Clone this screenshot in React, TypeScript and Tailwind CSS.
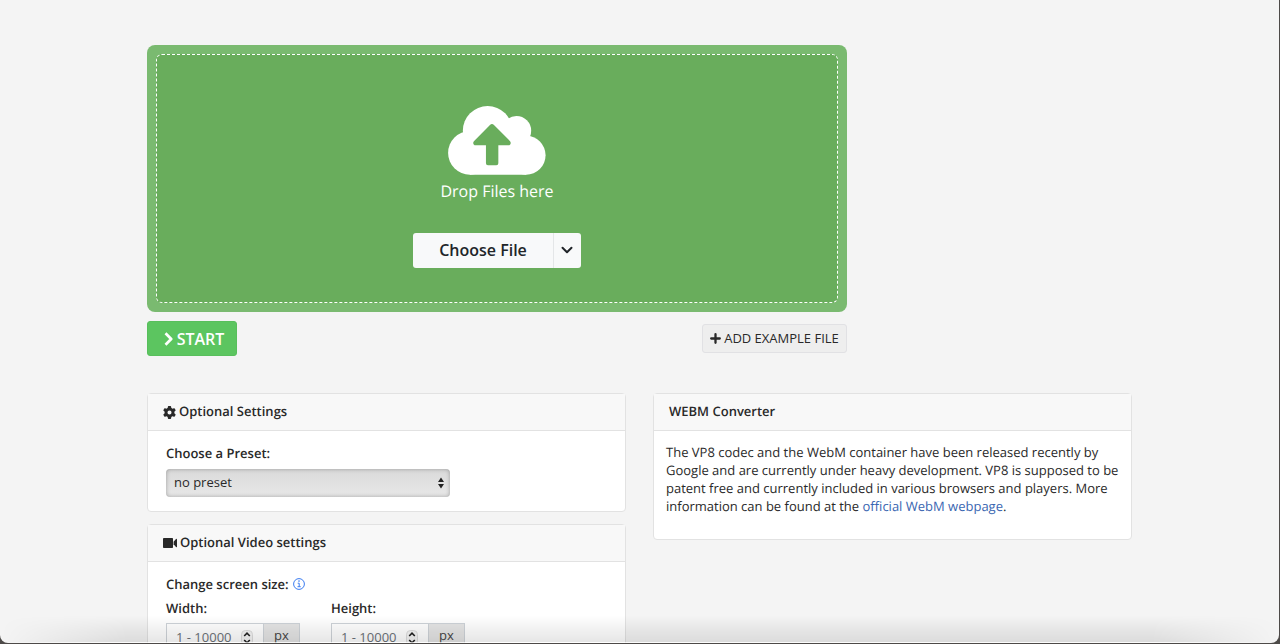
import React from "react";
import { FaGear } from "react-icons/fa6";

function CloudUpload() {
  return (
    <svg viewBox="144 48 292 206" className="h-[69px] w-[98px]" aria-hidden="true">
      <g fill="#fff">
        <circle cx="209" cy="188" r="65" />
        <circle cx="262" cy="122" r="74" />
        <circle cx="348" cy="122" r="44" />
        <circle cx="377" cy="195" r="58" />
        <path d="M209 123H377V253H209z" />
      </g>
      <path
        d="M269 105Q275 99 281 105L329 153Q334 160 327 165H294V219Q294 225 288 225H263Q257 225 257 219V165H223Q216 160 221 153Z"
        fill="#69ad5c"
      />
    </svg>
  );
}

function PlusIcon() {
  return (
    <svg viewBox="0 0 11 11" className="size-[11px]" stroke="currentColor" strokeWidth="2.3" strokeLinecap="round" aria-hidden="true">
      <path d="M5.5 1.2V9.8M1.2 5.5H9.8" />
    </svg>
  );
}

function VideoIcon() {
  return (
    <svg viewBox="0 0 14 10" className="h-[10px] w-[14px]" fill="currentColor" aria-hidden="true">
      <rect width="10" height="10" rx="0.8" />
      <path d="M10.6 3.8 13 1Q14 0.3 14 1.5V8.5Q14 9.7 13 9L10.6 6.2Z" />
    </svg>
  );
}

function InfoIcon() {
  return (
    <svg viewBox="0 0 12 12" className="size-3" fill="none" stroke="#3b7cf0" aria-hidden="true">
      <circle cx="6" cy="6" r="5.4" />
      <path d="M4.7 5.2H6.2V8.6M4.5 8.7H7.7" />
      <circle cx="6" cy="3.1" r="0.8" fill="#3b7cf0" stroke="none" />
    </svg>
  );
}

function Card({ icon, title, children }: { icon?: React.ReactNode; title: string; children: React.ReactNode }) {
  return (
    <section className="rounded-[4px] border border-[#e2e2e2] bg-white">
      <h2 className="flex h-[37px] items-center gap-[3px] border-b border-[#e2e2e2] bg-[#f8f8f8] px-[15px] text-[13px] font-semibold">
        {icon}
        {title}
      </h2>
      {children}
    </section>
  );
}

function SizeField({ id, label }: { id: string; label: string }) {
  return (
    <div className="w-[165px]">
      <label htmlFor={id} className="block font-semibold leading-[18px]">
        {label}
      </label>
      <div className="mt-[6px] flex h-7 w-[134px] border border-[#ced3d8]">
        <div className="relative w-24">
          <input
            id={id}
            type="text"
            inputMode="numeric"
            placeholder="1 - 10000"
            className="h-full w-full bg-white pl-[9px] text-[13px] placeholder:text-[#6c7278]"
          />
          <svg
            viewBox="0 0 12 16"
            className="absolute right-[10px] top-[6px] h-4 w-3"
            fill="none"
            stroke="#222"
            strokeWidth="1.6"
            aria-hidden="true"
          >
            <rect x="0.5" y="0.5" width="11" height="15" rx="4" fill="#f4f4f4" stroke="#ddd" strokeWidth="1" />
            <path d="M3.2 6 6 3.2 8.8 6M3.2 10 6 12.8 8.8 10" />
          </svg>
        </div>
        <span className="flex flex-1 items-center justify-center border-l border-[#ced3d8] bg-[#e5e5e5] pb-[3px] text-[#444]">
          px
        </span>
      </div>
    </div>
  );
}

export default function App() {
  return (
    <div className="h-screen overflow-hidden bg-[#4d4a48] pr-px pb-px font-['Open_Sans','Noto_Sans',sans-serif] text-[13px] text-[#292929] [text-rendering:geometricPrecision]">
      <div className="relative h-full overflow-hidden rounded-b-[8px] bg-[#f4f4f4]">
        <main className="mx-auto max-w-[985px] pt-[45px]">
          <form onSubmit={(e) => e.preventDefault()}>
            <div className="max-w-[700px]">
              <div className="rounded-[8px] bg-[#7aba70] p-[9px]">
                <div className="flex h-[249px] flex-col items-center rounded-[6px] border border-dashed border-white bg-[#69ad5c] pt-[51px]">
                  <CloudUpload />
                  <p className="mt-1 text-[16px] leading-6 text-white">Drop Files here</p>
                  <div className="mt-[30px] flex h-[35px] w-[168px] overflow-hidden rounded-[3px] bg-[#f8f9fa] text-[#212529]">
                    <button type="button" className="flex-1 pb-px text-[16px] font-semibold">
                      Choose File
                    </button>
                    <button
                      type="button"
                      aria-label="More sources"
                      className="flex w-7 items-center justify-center border-l border-[#e4e6e8] pr-px pb-px"
                    >
                      <svg viewBox="0 0 12 8" className="h-2 w-3" fill="none" stroke="currentColor" strokeWidth="2" strokeLinecap="round" strokeLinejoin="round" aria-hidden="true">
                        <path d="M1.5 1.7 6 6.2 10.5 1.7" />
                      </svg>
                    </button>
                  </div>
                </div>
              </div>
              <div className="mt-[9px] flex items-start justify-between">
                <button
                  type="submit"
                  className="flex h-[35px] w-[90px] items-center justify-center gap-[4px] rounded-[3px] border border-[#58bf5c] bg-[#5cc560] pl-1 text-[16px] font-semibold text-white"
                >
                  <svg viewBox="0 0 9 14" className="h-[14px] w-[9px]" fill="none" stroke="currentColor" strokeWidth="2.7" strokeLinejoin="round" aria-hidden="true">
                    <path d="M1.5 1.2 7.2 7 1.5 12.8" />
                  </svg>
                  START
                </button>
                <button
                  type="button"
                  className="mt-[3px] flex h-[29px] w-[145px] items-center justify-center gap-[3px] rounded-[3px] border border-[#e1e1e4] bg-[#eeeeee] text-[13px]"
                >
                  <PlusIcon />
                  ADD EXAMPLE FILE
                </button>
              </div>
            </div>

            <div className="mt-[37px] grid grid-cols-2 items-start gap-x-[27px]">
              <div className="flex flex-col gap-3">
                <Card icon={<FaGear className="size-[13px]" />} title="Optional Settings">
                  <div className="px-[18px] pt-[13px] pb-[14px]">
                    <label htmlFor="preset" className="block font-semibold leading-[18px]">
                      Choose a Preset:
                    </label>
                    <div className="relative mt-[7px] w-[284px]">
                      <select
                        id="preset"
                        className="block h-7 w-full appearance-none rounded-[4px] bg-linear-to-b from-[#dadada] to-[#e8e8e8] pl-2 text-[13px] shadow-[inset_0_0_4px_rgba(0,0,0,0.3)]"
                      >
                        <option>no preset</option>
                      </select>
                      <svg
                        viewBox="0 0 6 12"
                        className="pointer-events-none absolute right-[6px] top-2 h-3 w-[6px]"
                        fill="#222"
                        aria-hidden="true"
                      >
                        <path d="M0 5 3 0.5 6 5ZM0 7 3 11.5 6 7Z" />
                      </svg>
                    </div>
                  </div>
                </Card>
                <Card icon={<VideoIcon />} title="Optional Video settings">
                  <div className="px-[18px] pt-[13px] pb-[14px]">
                    <p className="flex items-center gap-1 font-semibold leading-[18px]">
                      Change screen size: <InfoIcon />
                    </p>
                    <div className="mt-[6px] flex">
                      <SizeField id="width" label="Width:" />
                      <SizeField id="height" label="Height:" />
                    </div>
                  </div>
                </Card>
              </div>
              <Card title="WEBM Converter">
                <p className="px-3 pt-3 pb-6 leading-[18px]">
                  The VP8 codec and the WebM container have been released recently by Google and are currently under
                  heavy development. VP8 is supposed to be patent free and currently included in various browsers and
                  players. More information can be found at the{" "}
                  <a href="#webm" className="text-[#3a66b1]">
                    official WebM webpage
                  </a>
                  .
                </p>
              </Card>
            </div>
          </form>
        </main>
        <div className="pointer-events-none absolute inset-x-0 bottom-0 h-7 border-b border-white/70 bg-linear-to-b from-transparent to-black/10 mask-x-from-90% mask-x-to-100%" />
      </div>
    </div>
  );
}
